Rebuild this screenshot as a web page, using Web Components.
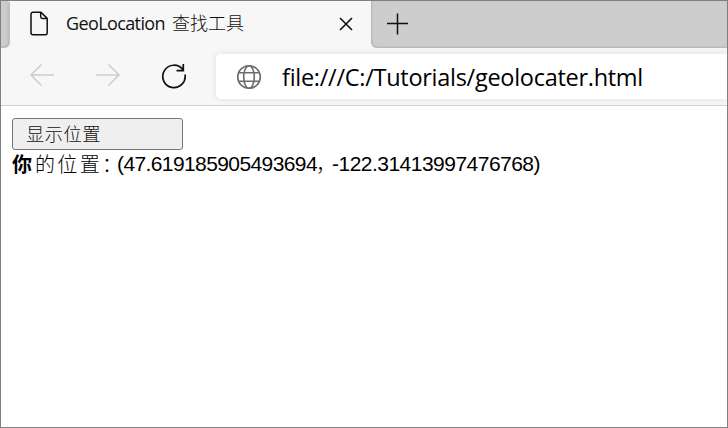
<!DOCTYPE html>
<html lang="zh-CN"><head><meta charset="utf-8"><title>GeoLocation 查找工具</title>
<style>html,body{margin:0;height:100%;overflow:hidden}</style></head>
<body><browser-window></browser-window>
<script>
const define=(name,html)=>customElements.define(name,class extends HTMLElement{
  constructor(){super();this.attachShadow({mode:'open'}).innerHTML=html;}
});

// Spreads its text over the width given in pixels.
customElements.define('fit-text',class extends HTMLElement{
  connectedCallback(){
    if(this.shadowRoot)return;
    const w=+this.getAttribute('width'),t=this.getAttribute('text');
    this.attachShadow({mode:'open'}).innerHTML=`<style>:host{display:block;flex:none;width:${w}px;white-space:nowrap}span{display:inline-block}</style><span></span>`;
    const s=this.shadowRoot.querySelector('span');
    s.textContent=t;
    s.style.letterSpacing=(w-s.getBoundingClientRect().width)/[...t].length+'px';
  }
});

define('tab-strip',`<style>
:host{display:flex;height:47px;flex:none;background:#f7f7f7}
.left{width:9px;background:linear-gradient(90deg,#cdcdcd 50%,#bcbcbc);border-radius:0 3px 6px 0;box-shadow:inset 0 -2px 1px #bcbcbc}
.tab{width:361px;display:flex;align-items:center;box-sizing:border-box;padding-left:20px}
.right{flex:1;background:#cdcdcd;border-radius:0 0 0 6px;display:flex;box-shadow:inset 1px -1px 2px #b4b4b4}
.title{display:flex;gap:7px;margin:-4px 0 0 16px;font:18px/26px "Open Sans","Noto Sans CJK SC",sans-serif;color:#111}
.cjk{font:300 18px/26px "Noto Sans CJK SC",sans-serif;margin-top:-1px}
.close{margin:-1px 0 0 95px}
svg{display:block;fill:none;stroke:#111;flex:none}
.file{margin-top:-1px}
.plus{margin:12px 0 0 16px}
</style><div class="left"></div><div class="tab">
<svg class="file" width="20" height="26" viewBox="0 0 20 26" stroke-width="1.5" stroke-linejoin="round"><path d="M3 1.2h8l6.2 6.2v14.4a2 2 0 0 1-2 2H3a2 2 0 0 1-2-2V3.2a2 2 0 0 1 2-2zM10.7 1.2v4.6a1.6 1.6 0 0 0 1.6 1.6h4.9"/></svg>
<div class="title"><fit-text width="99" text="GeoLocation"></fit-text><fit-text class="cjk" width="72" text="查找工具"></fit-text></div>
<svg class="close" width="14" height="14" viewBox="0 0 14 14" stroke-width="1.6"><path d="M1 1l12 12M13 1L1 13"/></svg>
</div><div class="right"><svg class="plus" width="22" height="22" viewBox="0 0 22 22" stroke-width="1.5"><path d="M10.5 .5v21M0 10.5h21"/></svg></div>`);

define('address-bar',`<style>
:host{display:flex;flex:1;align-items:center;height:45px;background:#fff;border-radius:5px 0 0 5px;padding-left:20px;box-sizing:border-box;box-shadow:0 0 6px #dedede}
svg{fill:none;stroke:#6c6c6c;stroke-width:1.6;flex:none}
fit-text{margin:0 0 0 20px;font:23.5px/32px "Open Sans",sans-serif;color:#000}
</style><svg width="26" height="26" viewBox="0 0 26 26"><circle cx="13" cy="13" r="11.3"/><ellipse cx="13" cy="13" rx="5.3" ry="11.3"/><path d="M2.5 8.7h21M2.5 17.3h21"/></svg>
<fit-text width="361" text="file:///C:/Tutorials/geolocater.html"></fit-text>`);

define('tool-bar',`<style>
:host{display:flex;flex:none;height:58px;box-sizing:border-box;background:#f7f7f7;border-bottom:1px solid #cfcfcf;padding-top:6px;overflow:hidden}
.nav{width:215px;display:flex;height:45px;align-items:center;box-sizing:border-box;padding-left:28px}
svg{fill:none;stroke:#cdcdcd;stroke-width:1.5;flex:none}
.forward{margin-left:40px}.reload{margin:-2px 0 0 40px;stroke:#111;stroke-width:1.7}
.back,.forward{margin-top:-3px}
</style><div class="nav">
<svg class="back" width="26" height="24" viewBox="0 0 26 24"><path d="M12.5 1.5L2 12l10.5 10.5M2 12h23"/></svg>
<svg class="forward" width="26" height="24" viewBox="0 0 26 24"><path d="M13.5 1.5L24 12 13.5 22.5M24 12H1"/></svg>
<svg class="reload" width="28" height="26" viewBox="0 0 28 26"><path d="M24 11.5A11.2 11.2 0 1 1 22 6.8M22.3 1v6.7h-6.8"/></svg>
</div><address-bar></address-bar>`);

define('page-content',`<style>
:host{display:block;flex:1;padding:12px 0 0 11px;color:#000}
button{display:flex;align-items:center;width:171px;height:32px;box-sizing:border-box;padding:0 0 2px 13px;border:1px solid #767676;border-radius:3px;background:#efefef;color:#111;font:300 18.3px/26px "Noto Sans CJK SC",sans-serif}
.result{display:flex;height:28px;align-items:center;font:21px/28px "Liberation Sans",Arial,sans-serif}
.cjk{font:300 20px/28px "Noto Sans CJK SC",sans-serif;margin-top:-1px}
.bold{font-weight:700}
.colon{margin-right:4px}
.comma{margin-left:-1px;margin-right:1px}
</style><button><fit-text width="75" text="显示位置"></fit-text></button>
<div class="result"><fit-text class="cjk bold" width="23" text="你"></fit-text><fit-text class="cjk" width="67" text="的位置"></fit-text><fit-text class="cjk colon" width="11" text="："></fit-text><fit-text width="200" text="(47.619185905493694"></fit-text><fit-text class="cjk comma" width="15" text="，"></fit-text><fit-text width="208" text="-122.31413997476768)"></fit-text></div>`);

define('browser-window',`<style>:host{display:flex;flex-direction:column;width:728px;height:428px;box-sizing:border-box;border:1px solid #808080;background:#fff;overflow:hidden}</style>
<tab-strip></tab-strip><tool-bar></tool-bar><page-content></page-content>`);
</script></body></html>
